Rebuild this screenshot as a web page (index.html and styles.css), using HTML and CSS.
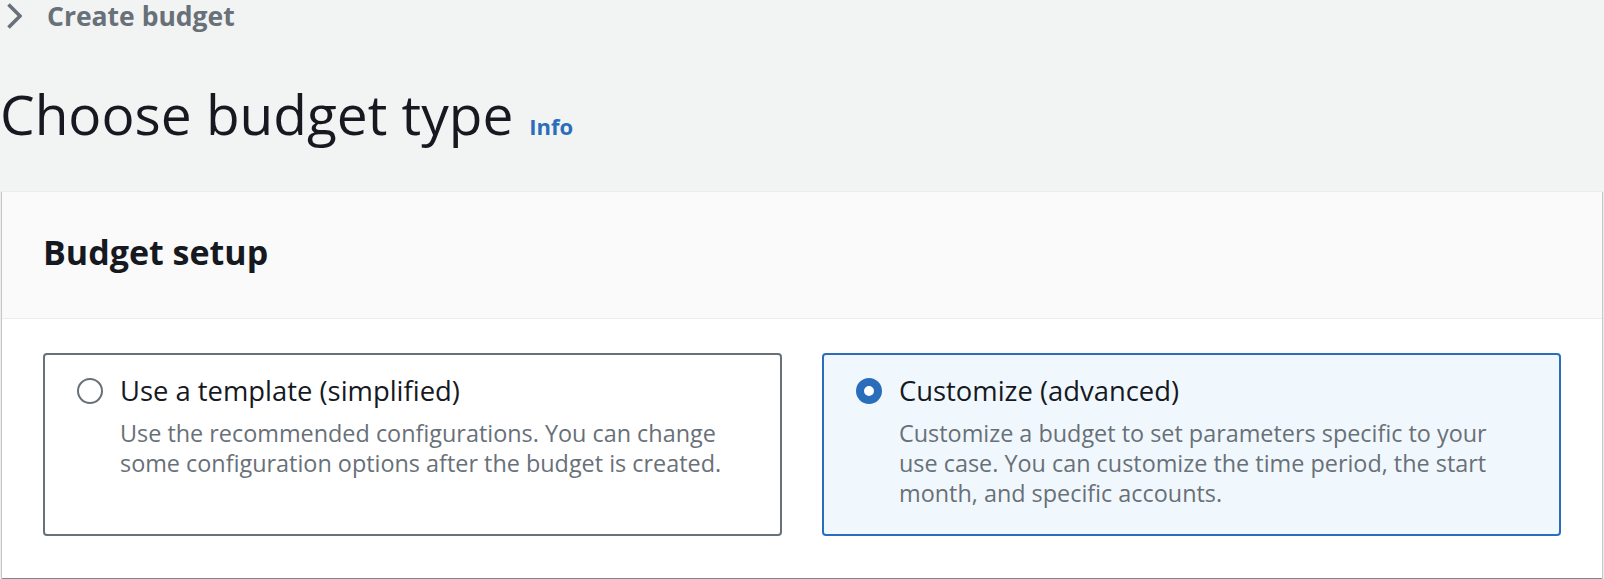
FILE: index.html
```html
<!DOCTYPE html>
<html>

<head>
    <meta charset="utf-8">
    <title>Create budget</title>
    <link rel="stylesheet" href="styles.css">
</head>

<body>
    <div class="b-page">

        <!-- breadcrumbs -->
        <nav class="b-crumbs">
            <svg class="b-crumb-icon" width="16" height="26" viewBox="0 0 16 26">
                <polyline points="2.5,1.5 14,13 2.5,24.5" fill="none" stroke="#687078" stroke-width="3.6"/>
            </svg>
            <span class="b-crumb">Create budget</span>
        </nav>

        <!-- page header -->
        <div class="b-header">
            <h1 class="b-title">Choose budget type</h1>
            <a class="b-info" href="#">Info</a>
        </div>

        <!-- container -->
        <div class="b-container">
            <div class="b-container-header">
                <h2>Budget setup</h2>
            </div>
            <div class="b-container-body">
                <div class="b-tiles">
                    <label class="b-tile">
                        <span class="b-radio"></span>
                        <span class="b-tile-text">
                            <span class="b-tile-label">Use a template (simplified)</span>
                            <span class="b-tile-desc">Use the recommended configurations. You can change some configuration options after the budget is created.</span>
                        </span>
                    </label>
                    <label class="b-tile b-selected">
                        <span class="b-radio b-checked"></span>
                        <span class="b-tile-text">
                            <span class="b-tile-label">Customize (advanced)</span>
                            <span class="b-tile-desc">Customize a budget to set parameters specific to your use case. You can customize the time period, the start month, and specific accounts.</span>
                        </span>
                    </label>
                </div>
            </div>
        </div>
    </div>
</body>

</html>
```

FILE: styles.css
```css
:root {
    --page-bk-color: #f2f3f3;
    --text-color: #16191f;
    --muted-color: #687078;
    --link-color: #2a6ebb;
    --divider-color: #eaeded;
    --selected-bk-color: #f1f8fd;
}

html, body {
    margin: 0;
    padding: 0;
}

body {
    font-family: "Open Sans", "Noto Sans", sans-serif;
    color: var(--text-color);
    background-color: var(--page-bk-color);
}

.b-page {
    min-height: 100vh;
    box-sizing: border-box;
}

/* breadcrumbs */

.b-crumbs {
    display: flex;
    align-items: center;
    height: 32px;
    padding-left: 6px;
}

.b-crumb-icon {
    display: block;
    margin-right: 25px;
}

.b-crumb {
    font-size: 26.5px;
    font-weight: bold;
    line-height: 32px;
    color: var(--muted-color);
}

/* page header */

.b-header {
    display: flex;
    align-items: baseline;
    margin-top: 49px;
    margin-bottom: 44px;
}

.b-title {
    margin: 0;
    font-size: 55px;
    font-weight: normal;
    line-height: 66px;
}

.b-info {
    margin-left: 16px;
    font-size: 22px;
    font-weight: bold;
    color: var(--link-color);
    text-decoration: none;
}

/* container */

.b-container {
    margin: 0 2px;
    background-color: white;
    box-shadow: 0 1px 1px 0 rgba(0, 28, 36, 0.3),
        1px 1px 1px 0 rgba(0, 28, 36, 0.15),
        -1px 1px 1px 0 rgba(0, 28, 36, 0.15);
    border-top: 1px solid var(--divider-color);
}

.b-container-header {
    background-color: #fafafa;
    padding: 38px 41px 44px;
    border-bottom: 1px solid var(--divider-color);
}

.b-container-header h2 {
    margin: 0;
    font-size: 34px;
    font-weight: bold;
    line-height: 44px;
}

.b-container-body {
    padding: 34px 41px 42px;
}

/* tiles */

.b-tiles {
    display: grid;
    grid-template-columns: 1fr 1fr;
    gap: 40px;
}

.b-tile {
    display: flex;
    align-items: flex-start;
    padding: 18px 42px 26px 32px;
    border: 2px solid var(--muted-color);
    border-radius: 4px;
    cursor: pointer;
}

.b-tile.b-selected {
    border-color: var(--link-color);
    background-color: var(--selected-bk-color);
}

.b-radio {
    flex: none;
    box-sizing: border-box;
    width: 26px;
    height: 26px;
    margin-top: 5px;
    margin-right: 17px;
    border: 2.5px solid var(--muted-color);
    border-radius: 50%;
    background-color: white;
}

.b-radio.b-checked {
    border: 8px solid var(--link-color);
}

.b-tile-text {
    display: flex;
    flex-direction: column;
}

.b-tile-label {
    font-size: 27.4px;
    line-height: 36px;
}

.b-tile-desc {
    margin-top: 9px;
    font-size: 23.4px;
    line-height: 30px;
    color: var(--muted-color);
}
```
